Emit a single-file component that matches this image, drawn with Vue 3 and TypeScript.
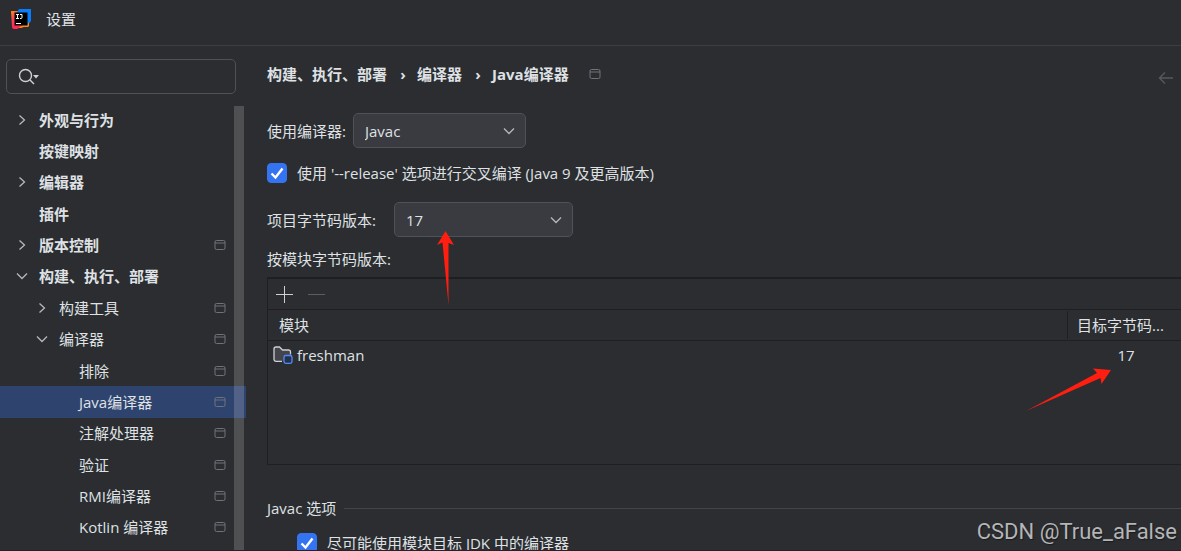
<script setup lang="ts">
import { ref } from 'vue'

interface TreeItem {
  label: string
  level: number
  arrow?: 'right' | 'down'
  scoped?: boolean
}

const items: TreeItem[] = [
  { label: '外观与行为', level: 0, arrow: 'right' },
  { label: '按键映射', level: 0 },
  { label: '编辑器', level: 0, arrow: 'right' },
  { label: '插件', level: 0 },
  { label: '版本控制', level: 0, arrow: 'right', scoped: true },
  { label: '构建、执行、部署', level: 0, arrow: 'down' },
  { label: '构建工具', level: 1, arrow: 'right', scoped: true },
  { label: '编译器', level: 1, arrow: 'down', scoped: true },
  { label: '排除', level: 2, scoped: true },
  { label: 'Java编译器', level: 2, scoped: true },
  { label: '注解处理器', level: 2, scoped: true },
  { label: '验证', level: 2, scoped: true },
  { label: 'RMI编译器', level: 2, scoped: true },
  { label: 'Kotlin 编译器', level: 2, scoped: true },
]

const selected = ref('Java编译器')
const query = ref('')
const compiler = ref('Javac')
const bytecode = ref('17')
const useRelease = ref(true)
const useModuleJdk = ref(true)
</script>

<template>
  <div class="window">
    <header class="titlebar">
      <svg class="logo" width="20" height="20" viewBox="0 0 20 20" aria-hidden="true">
        <defs>
          <linearGradient id="warm" x1="0" y1="0" x2="0.3" y2="1">
            <stop offset="0" stop-color="#ff8a1a" />
            <stop offset="0.5" stop-color="#fe3f5c" />
            <stop offset="1" stop-color="#fe2857" />
          </linearGradient>
        </defs>
        <path d="M0 2h9v16l-3 2H2L1 18z" fill="url(#warm)" />
        <path d="M8 0h12v12l-3 4H9L5 5z" fill="#087cfa" />
        <path d="M9 16h7l2-3v4l-1 1h-4l-3 1H6z" fill="#fe8a14" />
        <path d="M2 16h10l-3 2-3 2H2z" fill="#fe2857" />
        <path d="M3.500 3.500h13v13h-13z" fill="#000" />
        <path d="M5 5.500h3M6.500 5.500v4M5 9.500h3M9 5.500h2v3q0 1-1 1H9M5 14.500h5" fill="none" stroke="#fff" stroke-width="1" />
      </svg>
      <h1>设置</h1>
    </header>

    <div class="body">
      <aside class="sidebar">
        <label class="search">
          <svg width="22" height="18" viewBox="0 0 22 18" fill="none" aria-hidden="true">
            <circle cx="7.500" cy="7.500" r="6" stroke="#ced0d6" stroke-width="1.400" />
            <path d="M12 12l4 4" stroke="#ced0d6" stroke-width="1.500" />
            <path d="M15 7h6l-3 3.500z" fill="#ced0d6" />
          </svg>
          <input v-model="query" type="text" aria-label="搜索设置" />
        </label>
        <div class="tree-area">
          <ul class="tree">
            <li v-for="item in items" :key="item.label">
              <button
                type="button"
                class="node"
                :class="['level-' + item.level, { selected: item.label === selected }]"
                @click="selected = item.label"
              >
                <span class="twisty">
                  <svg v-if="item.arrow === 'right'" width="12" height="12" viewBox="0 0 12 12" aria-hidden="true">
                    <path d="M3.500 1.500L8.500 6l-5 4.500" />
                  </svg>
                  <svg v-else-if="item.arrow === 'down'" width="12" height="12" viewBox="0 0 12 12" aria-hidden="true">
                    <path d="M1 3.500l5 5 5-5" />
                  </svg>
                </span>
                <span class="name">{{ item.label }}</span>
                <svg v-if="item.scoped" class="scope" width="12" height="12" viewBox="0 0 12 12" aria-hidden="true">
                  <rect x="1" y="1.500" width="10" height="9" rx="1.500" />
                  <path d="M1 4h10" />
                </svg>
              </button>
            </li>
          </ul>
          <div class="scrollbar"></div>
        </div>
      </aside>

      <main class="content">
        <nav class="crumbs">
          <a href="#build">构建、执行、部署</a>
          <span class="sep">›</span>
          <a href="#compiler">编译器</a>
          <span class="sep">›</span>
          <a href="#java">Java编译器</a>
          <svg class="scope" width="12" height="12" viewBox="0 0 12 12" aria-hidden="true">
            <rect x="1" y="1.500" width="10" height="9" rx="1.500" />
            <path d="M1 4h10" />
          </svg>
          <button type="button" class="back" aria-label="后退">
            <svg width="16" height="14" viewBox="0 0 16 14" aria-hidden="true">
              <path d="M15 7H1.500M7 1.500L1.500 7 7 12.500" />
            </svg>
          </button>
        </nav>

        <div class="row compiler-row">
          <label for="compiler">使用编译器:</label>
          <span class="combo combo-compiler">
            <select id="compiler" v-model="compiler">
              <option>Javac</option>
              <option>Eclipse</option>
            </select>
            <svg width="12" height="12" viewBox="0 0 12 12" aria-hidden="true"><path d="M1 3.500l5 5 5-5" /></svg>
          </span>
        </div>

        <label class="row check release-row">
          <span class="box">
            <input v-model="useRelease" type="checkbox" />
            <svg v-if="useRelease" width="20" height="20" viewBox="0 0 20 20" aria-hidden="true"><path d="M4.500 10.500l4 4 7-9" /></svg>
          </span>
          <span>使用 '--release' 选项进行交叉编译 (Java 9 及更高版本)</span>
        </label>

        <div class="row bytecode-row">
          <label for="bytecode">项目字节码版本:</label>
          <span class="combo combo-bytecode">
            <select id="bytecode" v-model="bytecode">
              <option>17</option>
              <option>11</option>
            </select>
            <svg width="12" height="12" viewBox="0 0 12 12" aria-hidden="true"><path d="M1 3.500l5 5 5-5" /></svg>
          </span>
        </div>

        <div class="caption">按模块字节码版本:</div>

        <section class="modules">
          <div class="tools">
            <button type="button" aria-label="添加">
              <svg width="17" height="17" viewBox="0 0 17 17" aria-hidden="true"><path d="M8.500 0v17M0 8.500h17" stroke="#ced0d6" stroke-width="1" /></svg>
            </button>
            <button type="button" aria-label="移除" disabled>
              <svg width="17" height="17" viewBox="0 0 17 17" aria-hidden="true"><path d="M0 8.500h17" stroke="#5a5d63" stroke-width="1" /></svg>
            </button>
          </div>
          <table>
            <thead>
              <tr>
                <th scope="col">模块</th>
                <th scope="col" class="target"><span>目标字节码...</span></th>
              </tr>
            </thead>
            <tbody>
              <tr>
                <td>
                  <span class="module">
                    <svg width="20" height="18" viewBox="0 0 20 18" fill="none" aria-hidden="true">
                      <path d="M9 15.300H3a2 2 0 0 1-2-2V3a2 2 0 0 1 2-2h3.500l3 3H15.500a2 2 0 0 1 2 2v2.500" fill="#43454a" stroke="#ced0d6" stroke-width="1.300" />
                      <rect x="11" y="9.500" width="8" height="7.800" rx="1.800" fill="#25324d" stroke="#548af7" stroke-width="1.300" />
                    </svg>
                    freshman
                  </span>
                </td>
                <td class="value">17</td>
              </tr>
            </tbody>
          </table>
        </section>

        <h2 class="group"><span>Javac 选项</span></h2>

        <label class="row check jdk-row">
          <span class="box">
            <input v-model="useModuleJdk" type="checkbox" />
            <svg v-if="useModuleJdk" width="20" height="20" viewBox="0 0 20 20" aria-hidden="true"><path d="M4.500 10.500l4 4 7-9" /></svg>
          </span>
          <span>尽可能使用模块目标 JDK 中的编译器</span>
        </label>

        <svg class="pointer pointer-bytecode" width="18" height="76" viewBox="0 0 18 76" aria-hidden="true">
          <path d="M8.500 1L17 15l-5.500-2L11.500 75 5.500 12.500 0 15z" />
        </svg>
        <svg class="pointer pointer-target" width="86" height="44" viewBox="0 0 86 44" aria-hidden="true">
          <path d="M85 2L75.500 16l-1-6L0 43 71 5l-4-4.500z" />
        </svg>
      </main>
    </div>
    <div class="watermark">CSDN @True_aFalse</div>
  </div>
</template>

<style>
body {
  margin: 0;
  background: #2b2d30;
}
</style>

<style scoped>
* {
  box-sizing: border-box;
}
.window {
  position: relative;
  display: flex;
  flex-direction: column;
  height: 100vh;
  overflow: hidden;
  background: #2b2d30;
  border-bottom: 1px solid #2a2128;
  color: #dfe1e5;
  font-family: "Open Sans", "Noto Sans CJK SC", sans-serif;
  font-size: 15px;
  line-height: 20px;
}
button,
input,
select {
  font: inherit;
  color: inherit;
}
svg {
  display: block;
  flex: none;
}
.titlebar {
  display: flex;
  flex: none;
  align-items: center;
  gap: 15px;
  height: 46px;
  padding: 0 11px 7px;
  border-bottom: 1px solid #3c3e42;
}
h1 {
  margin: 0;
  font-size: 15px;
  font-weight: 400;
}
.body {
  display: flex;
  flex: 1;
  min-height: 0;
}
.sidebar {
  display: flex;
  flex: none;
  flex-direction: column;
  width: 246px;
  padding: 13px 0 7px;
}
.search {
  display: flex;
  flex: none;
  align-items: center;
  height: 35px;
  margin: 0 10px 10px 6px;
  padding: 0 10px 0 11px;
  border: 1px solid #4e5157;
  border-radius: 5px;
}
.search input {
  flex: 1;
  min-width: 0;
  border: 0;
  outline: 0;
  background: none;
}
.tree-area {
  display: grid;
  flex: 1;
  min-height: 0;
}
.tree,
.scrollbar {
  grid-area: 1 / 1;
}
.tree {
  display: flex;
  flex-direction: column;
  margin: 0;
  padding: 0;
  list-style: none;
}
.tree li {
  display: flex;
  flex: 1;
  min-height: 0;
}
.scrollbar {
  justify-self: end;
  width: 10px;
  margin: 2px 2px -8px 0;
  background: rgba(255, 255, 255, 0.17);
}
.node {
  display: flex;
  flex: 1;
  align-items: center;
  gap: 11px;
  padding: 0 20px 0 16px;
  border: 0;
  background: none;
  text-align: left;
}
.node.selected {
  background: #2e436e;
}
.level-0 {
  font-weight: 700;
}
.level-1 {
  padding-left: 36px;
}
.level-2 {
  padding-left: 56px;
}
.twisty {
  width: 12px;
}
.twisty path,
.combo path {
  fill: none;
  stroke: #b4b8bf;
  stroke-width: 1.3;
}
.name {
  flex: 1;
}
.scope {
  fill: none;
  stroke: #6f737a;
  stroke-width: 1;
}
.content {
  position: relative;
  flex: 1;
  min-width: 0;
  padding: 18px 0 0 21px;
}
.crumbs {
  display: flex;
  align-items: center;
  height: 20px;
  font-weight: 700;
}
.crumbs a {
  color: inherit;
  text-decoration: none;
}
.sep {
  width: 30px;
  padding-left: 2px;
  text-align: center;
}
.crumbs .scope {
  margin-left: 20px;
}
.back {
  margin: 7px 7px 0 auto;
  padding: 0;
  border: 0;
  background: none;
}
.back path {
  fill: none;
  stroke: #56585d;
  stroke-width: 1.5;
}
.row {
  display: flex;
  align-items: center;
}
.compiler-row {
  gap: 7px;
  margin-top: 29px;
}
.combo {
  display: grid;
  align-items: center;
  height: 35px;
}
.combo select,
.combo svg {
  grid-area: 1 / 1;
}
.combo svg {
  justify-self: end;
  margin-right: 11px;
  pointer-events: none;
}
.combo select {
  width: 100%;
  height: 35px;
  padding: 0 32px 0 11px;
  border: 1px solid #4e5157;
  border-radius: 5px;
  background: #393b40;
  appearance: none;
}
.combo-compiler {
  width: 173px;
}
.combo-bytecode {
  width: 179px;
}
.check {
  gap: 10px;
  height: 20px;
}
.release-row {
  margin-top: 15px;
}
.box {
  display: grid;
  flex: none;
}
.box input,
.box svg {
  grid-area: 1 / 1;
}
.box input {
  width: 20px;
  height: 20px;
  margin: 0;
  border: 1px solid #6f737a;
  border-radius: 4px;
  appearance: none;
}
.box input:checked {
  border-color: #3574f0;
  background: #3574f0;
}
.box path {
  fill: none;
  stroke: #fff;
  stroke-width: 2.4;
}
.box svg {
  pointer-events: none;
}
.bytecode-row {
  gap: 18px;
  margin-top: 19px;
}
.caption {
  margin-top: 12px;
}
.modules {
  height: 188px;
  margin-top: 8px;
  border: 1px solid #1e1f22;
  border-top-width: 2px;
  border-right: 0;
}
.tools {
  display: flex;
  align-items: center;
  gap: 15px;
  height: 31px;
  padding: 0 8px;
  border-bottom: 1px solid #1e1f22;
}
.tools button {
  padding: 0;
  border: 0;
  background: none;
}
table {
  width: 100%;
  border-spacing: 0;
  table-layout: fixed;
}
th {
  height: 31px;
  padding: 0 0 0 11px;
  border-bottom: 1px solid #1e1f22;
  font-weight: 400;
  text-align: left;
}
th.target {
  width: 114px;
  padding: 1px 0;
}
.target span {
  display: block;
  height: 28px;
  padding-left: 9px;
  border-left: 1px solid #1e1f22;
  line-height: 28px;
}
td {
  height: 28px;
  padding: 0 0 0 5px;
}
.module {
  display: flex;
  align-items: center;
  gap: 4px;
}
td.value {
  padding: 0 0 0 4px;
  text-align: center;
}
.group {
  display: flex;
  align-items: center;
  gap: 8px;
  margin: 33px 0 0;
  font-size: 15px;
  font-weight: 400;
}
.group::after {
  flex: 1;
  height: 1px;
  background: #43454a;
  content: "";
}
.jdk-row {
  margin: 15px 0 0 30px;
}
.pointer {
  position: absolute;
  fill: #ff1e10;
  pointer-events: none;
}
.pointer-bytecode {
  top: 184px;
  left: 191px;
}
.pointer-target {
  top: 322px;
  right: 69px;
}
.watermark {
  position: absolute;
  right: 4px;
  bottom: 4px;
  color: #b4b5b7;
  font-family: Roboto, sans-serif;
  font-size: 22px;
  line-height: 28px;
  text-shadow: 1px 1px 1px #1a1b1d;
}
</style>
